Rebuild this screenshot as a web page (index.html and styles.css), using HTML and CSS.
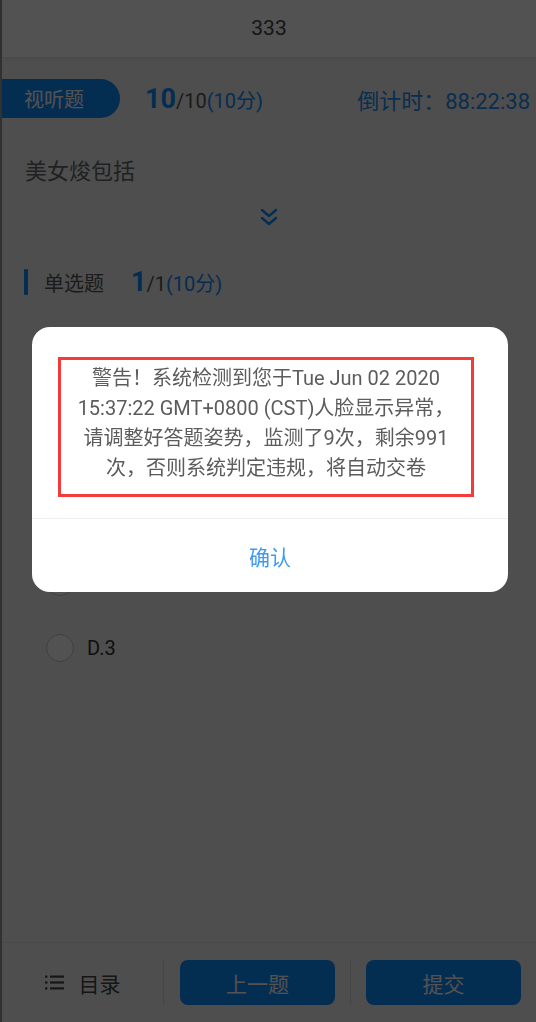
FILE: index.html
```html
<!DOCTYPE html>
<html lang="zh-CN">
<head>
<meta charset="utf-8">
<title>333</title>
<link rel="stylesheet" href="styles.css">
</head>
<body>
<div class="app">
  <header class="topbar">333</header>

  <main class="content">
    <div class="meta-row">
      <span class="badge">视听题</span>
      <span class="progress"><b class="cur">10</b><span class="total">/10</span><span class="score">(10分)</span></span>
      <span class="timer">倒计时：88:22:38</span>
    </div>

    <div class="stem">美女焌包括</div>

    <div class="expand">
      <svg width="18" height="20" viewBox="0 0 18 20" aria-hidden="true">
        <polyline points="2,2 9,8 16,2" fill="none" stroke="#0f8bff" stroke-width="2.4" stroke-linecap="round" stroke-linejoin="round"/>
        <polyline points="2,10 9,16 16,10" fill="none" stroke="#0f8bff" stroke-width="2.4" stroke-linecap="round" stroke-linejoin="round"/>
      </svg>
    </div>

    <div class="section-title">
      <span class="bar"></span>
      <span class="sec-name">单选题</span>
      <span class="progress"><b class="cur">1</b><span class="total">/1</span><span class="score">(10分)</span></span>
    </div>

    <ul class="options">
      <li class="option"><span class="radio"></span><span class="opt-text">C.2</span></li>
      <li class="option"><span class="radio"></span><span class="opt-text">D.3</span></li>
    </ul>
  </main>

  <footer class="bottombar">
    <div class="catalog">
      <svg width="19" height="15" viewBox="0 0 19 15" aria-hidden="true">
        <rect x="0" y="0.5" width="2.4" height="2.2" fill="#444"/>
        <rect x="0" y="6.4" width="2.4" height="2.2" fill="#444"/>
        <rect x="0" y="12.3" width="2.4" height="2.2" fill="#444"/>
        <rect x="5" y="0.5" width="14" height="2.2" fill="#444"/>
        <rect x="5" y="6.4" width="14" height="2.2" fill="#444"/>
        <rect x="5" y="12.3" width="14" height="2.2" fill="#444"/>
      </svg>
      <span class="catalog-text">目录</span>
    </div>
    <span class="vline"></span>
    <button class="btn">上一题</button>
    <span class="vline"></span>
    <button class="btn">提交</button>
  </footer>
</div>

<div class="mask">
  <div class="dialog">
    <div class="dialog-msg">警告！系统检测到您于Tue Jun 02 2020 15:37:22 GMT+0800 (CST)人脸显示异常，请调整好答题姿势，监测了9次，剩余991次，否则系统判定违规，将自动交卷</div>
    <div class="dialog-foot">确认</div>
  </div>
</div>
</body>
</html>
```

FILE: styles.css
```css
* { box-sizing: border-box; }

html, body {
  margin: 0;
  padding: 0;
  height: 100%;
}

body {
  font-family: Roboto, "Noto Sans CJK SC", sans-serif;
  background: #f2f2f2;
  color: #333;
}

.app {
  min-height: 100vh;
  display: flex;
  flex-direction: column;
  background: #f2f2f2;
  border-left: 2px solid #999999;
}

.topbar {
  height: 57px;
  background: #ffffff;
  display: flex;
  align-items: center;
  justify-content: center;
  font-size: 21px;
  color: #444;
  padding-bottom: 2px;
  box-shadow: 0 2px 4px rgba(0, 0, 0, 0.06);
}

.content {
  flex: 1;
  display: flex;
  flex-direction: column;
}

.meta-row {
  margin-top: 22px;
  height: 39px;
  display: flex;
  align-items: center;
  padding-right: 6px;
}

.badge {
  width: 118px;
  height: 39px;
  padding-left: 22px;
  display: flex;
  align-items: center;
  background: #0f8bff;
  color: #ffffff;
  font-size: 20px;
  border-radius: 0 20px 20px 0;
}

.progress {
  display: flex;
  align-items: baseline;
  margin-left: 25px;
}

.cur {
  font-size: 27px;
  font-weight: 700;
  color: #0f8bff;
}

.total {
  font-size: 20px;
  color: #555;
}

.score {
  font-size: 20px;
  color: #0f8bff;
}

.timer {
  margin-left: auto;
  font-size: 22px;
  color: #1f8ef5;
}

.stem {
  margin-top: 39px;
  padding-left: 23px;
  font-size: 22px;
  line-height: 30px;
  color: #666;
}

.expand {
  margin-top: 21px;
  display: flex;
  justify-content: center;
  height: 20px;
}

.section-title {
  margin-top: 39px;
  height: 30px;
  display: flex;
  align-items: center;
  padding-left: 22px;
}

.bar {
  width: 4px;
  height: 26px;
  background: #0f8bff;
  border-radius: 1px;
}

.sec-name {
  margin-left: 16px;
  font-size: 20px;
  color: #555;
}

.section-title .progress {
  margin-left: 27px;
}

.options {
  list-style: none;
  margin: 252px 0 0;
  padding: 0;
}

.option {
  height: 66px;
  display: flex;
  align-items: center;
  padding-left: 44px;
}

.radio {
  width: 28px;
  height: 28px;
  border-radius: 50%;
  border: 1.5px solid #c4c4c4;
  background: #fff;
}

.opt-text {
  margin-left: 13px;
  font-size: 20px;
  color: #333;
}

.bottombar {
  height: 80px;
  border-top: 1px solid #e4e4e4;
  background: #f2f2f2;
  display: flex;
  align-items: center;
  padding-right: 12px;
}

.catalog {
  width: 161px;
  display: flex;
  align-items: center;
  justify-content: center;
  gap: 15px;
}

.catalog-text {
  font-size: 21px;
  color: #444;
}

.vline {
  width: 1px;
  height: 45px;
  background: #d8d8d8;
}

.btn {
  width: 155px;
  height: 45px;
  margin: 0 15px 0 16px;
  border: 0;
  border-radius: 8px;
  background: #0f8bff;
  color: #ffffff;
  font-family: Roboto, "Noto Sans CJK SC", sans-serif;
  font-size: 21px;
  padding: 0;
}

.btn:last-child {
  margin: 0 0 0 15px;
}

.mask {
  position: fixed;
  top: 0;
  left: 0;
  width: 536px;
  height: 1022px;
  background-color: rgba(0, 0, 0, 0.68);
  z-index: 10;
  padding: 327px 28px 0 32px;
}

.dialog {
  width: 476px;
  background: #ffffff;
  border-radius: 18px;
  overflow: hidden;
}

.dialog-msg {
  margin: 30px 34px 21px 26px;
  border: 3px solid #f43a3a;
  padding: 3px 8px 11px;
  text-align: center;
  font-size: 20px;
  line-height: 30px;
  color: #5c5c5c;
}

.dialog-foot {
  height: 74px;
  border-top: 1px solid #eeeeee;
  display: flex;
  align-items: center;
  justify-content: center;
  font-size: 21px;
  color: #3f9af0;
}
```
